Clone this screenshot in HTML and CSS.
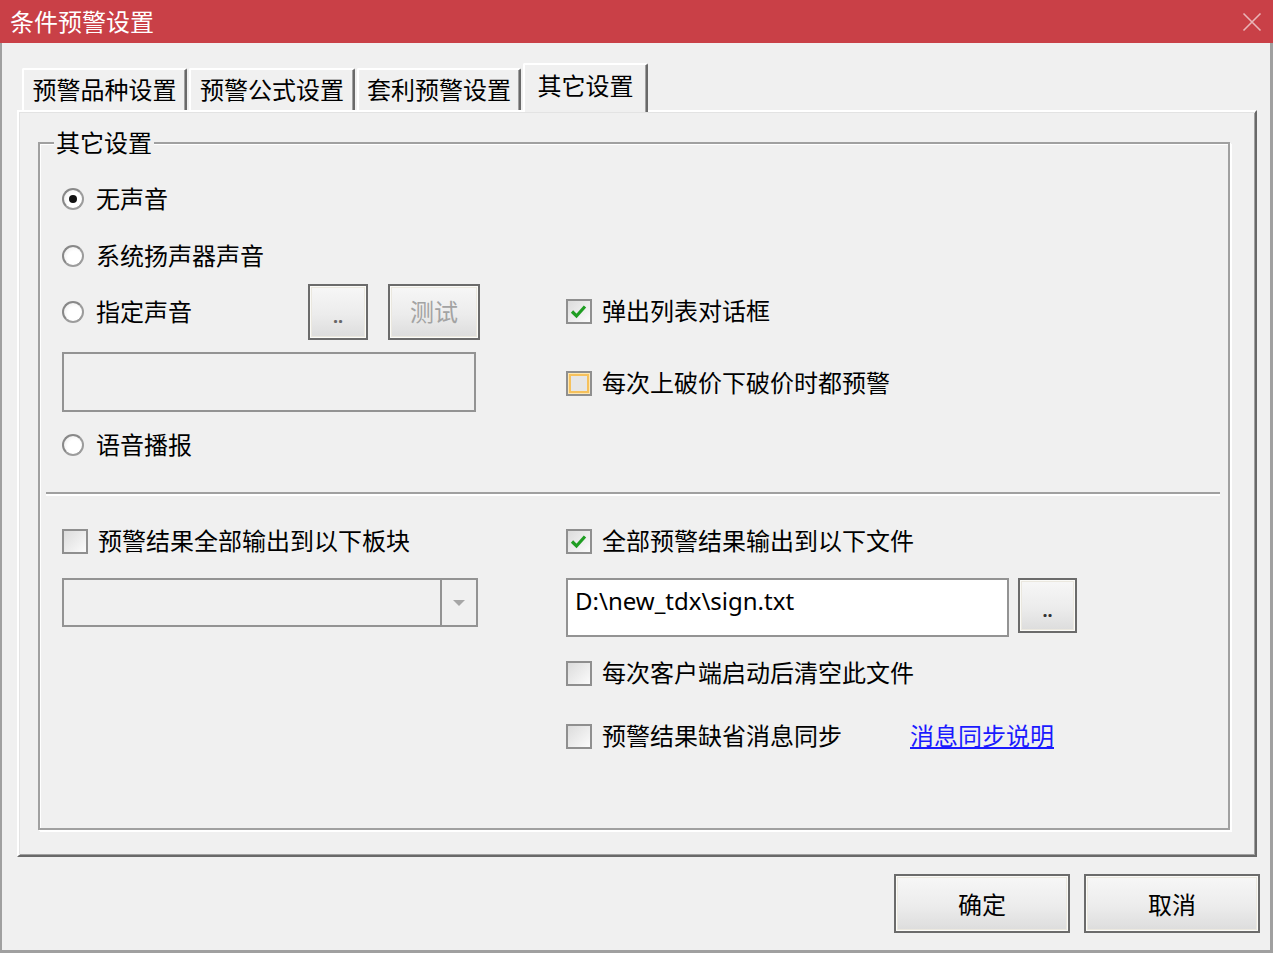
FILE: index.html
```html
<!DOCTYPE html>
<html lang="zh-CN">
<head>
<meta charset="utf-8">
<title>条件预警设置</title>
<link rel="stylesheet" href="styles.css">
</head>
<body>
<div class="window">
  <div class="titlebar">
    <span class="title">条件预警设置</span>
    <svg class="close" width="20" height="20" viewBox="0 0 20 20" aria-hidden="true"><path d="M1.5 1.5L18.5 18.5M18.5 1.5L1.5 18.5" stroke="#e9b5b8" stroke-width="1.6" fill="none"/></svg>
  </div>
  <div class="client">
    <div class="tabs">
      <div class="tab t1">预警品种设置</div>
      <div class="tab t2">预警公式设置</div>
      <div class="tab t3">套利预警设置</div>
      <div class="tab active">其它设置</div>
    </div>
    <div class="panel">
      <div class="group">
        <span class="group-title">其它设置</span>
        <div class="section upper">
          <div class="col">
            <div class="row r1"><span class="radio checked"></span>无声音</div>
            <div class="row r2"><span class="radio"></span>系统扬声器声音</div>
            <div class="row r3"><span class="radio"></span>指定声音<span class="spacer"></span><span class="btn b-dots">..</span><span class="btn b-test">测试</span></div>
            <div class="textbox"></div>
            <div class="row r4"><span class="radio"></span>语音播报</div>
          </div>
          <div class="col col-right-up">
            <div class="row"><span class="check"><svg width="22" height="21" viewBox="0 0 22 21"><path d="M4 10.5L8.5 15L17 5.5" stroke="#1f9e22" stroke-width="3.2" fill="none"/></svg></span>弹出列表对话框</div>
            <div class="row ru2"><span class="check hover"></span>每次上破价下破价时都预警</div>
          </div>
        </div>
        <div class="sep"></div>
        <div class="section lower">
          <div class="col">
            <div class="row l1"><span class="check"></span>预警结果全部输出到以下板块</div>
            <div class="combo"><span class="combo-btn"><span class="arrow"></span></span></div>
          </div>
          <div class="col">
            <div class="row l1"><span class="check"><svg width="22" height="21" viewBox="0 0 22 21"><path d="M4 10.5L8.5 15L17 5.5" stroke="#1f9e22" stroke-width="3.2" fill="none"/></svg></span>全部预警结果输出到以下文件</div>
            <div class="filerow">
              <div class="fileinput">D:\new_tdx\sign.txt</div>
              <span class="btn fbtn">..</span>
            </div>
            <div class="row l3"><span class="check"></span>每次客户端启动后清空此文件</div>
            <div class="row l4"><span class="check"></span>预警结果缺省消息同步<a class="link" href="#">消息同步说明</a></div>
          </div>
        </div>
      </div>
    </div>
    <div class="actions">
      <span class="btn abtn">确定</span>
      <span class="btn abtn">取消</span>
    </div>
  </div>
</div>
</body>
</html>
```
FILE: styles.css
```css
* { box-sizing: border-box; }
html, body { margin: 0; padding: 0; }
body {
  width: 1273px;
  height: 953px;
  overflow: hidden;
  background: #f0f0f0;
  font-family: "Noto Sans", "Noto Sans CJK SC", sans-serif;
  font-size: 24px;
  color: #000;
}
.window {
  width: 1273px;
  height: 953px;
  display: flex;
  flex-direction: column;
  background: #f0f0f0;
}
.titlebar {
  height: 43px;
  flex: none;
  background: #c94047;
  color: #fff;
  display: flex;
  align-items: center;
  justify-content: space-between;
  padding: 0 11px 0 10px;
}
.title { line-height: 43px; }
.close { display: block; }
.client {
  flex: 1;
  border-left: 2px solid #a0a0a0;
  border-right: 3px solid #a0a0a0;
  border-bottom: 3px solid #a0a0a0;
  display: flex;
  flex-direction: column;
}
.tabs {
  display: flex;
  align-items: flex-end;
  gap: 2px;
  height: 47px;
  margin: 20px 0 0 20px;
}
.tab {
  height: 42px;
  line-height: 39px;
  text-align: center;
  white-space: nowrap;
  border-top: 2px solid #fff;
  border-left: 2px solid #fff;
  border-right: 2px solid #696969;
  box-shadow: inset -1px 0 0 #a0a0a0;
  border-radius: 2px 2px 0 0;
  background: #f0f0f0;
}
.t1 { width: 165px; }
.t2 { width: 166px; }
.t3 { width: 164px; }
.tab.active {
  width: 125px;
  height: 49px;
  margin-bottom: -2px;
  line-height: 42px;
  padding-bottom: 5px;
  position: relative;
  z-index: 1;
}
.panel {
  width: 1240px;
  height: 747px;
  margin-left: 15px;
  border: 2px solid;
  border-color: #fff #696969 #696969 #fff;
  box-shadow: inset 1px 1px 0 #e3e3e3, inset -1px -1px 0 #a0a0a0;
  padding: 30px 0 0 19px;
}
.group {
  position: relative;
  width: 1192px;
  height: 688px;
  border: 2px solid #a0a0a0;
  box-shadow: inset 1px 1px 0 #fff, 1px 1px 0 #fff, 2px 2px 0 #fff;
}
.group-title {
  position: absolute;
  top: -16px;
  left: 14px;
  padding: 0 2px;
  line-height: 30px;
  background: #f0f0f0;
}
.section {
  display: grid;
  grid-template-columns: 504px 1fr;
  padding-left: 22px;
}
.col {
  display: flex;
  flex-direction: column;
  align-items: flex-start;
}
.row {
  display: flex;
  align-items: center;
  height: 30px;
  line-height: 30px;
  white-space: nowrap;
}
.r1 { margin-top: 40px; }
.r2 { margin-top: 27px; }
.r3 { margin-top: 13px; height: 56px; width: 418px; }
.r4 { margin-top: 18px; }
.col-right-up { padding-top: 152px; }
.ru2 { margin-top: 42px; }
.spacer { flex: 1; }

.radio {
  width: 22px;
  height: 22px;
  flex: none;
  margin-right: 12px;
  border-radius: 50%;
  border: 2px solid #9c9c9c;
  border-top-color: #888;
  border-left-color: #888;
  background: radial-gradient(circle at 60% 60%, #fff 45%, #e6e6e6 100%);
  display: flex;
  align-items: center;
  justify-content: center;
}
.radio.checked::after {
  content: "";
  width: 8px;
  height: 8px;
  border-radius: 50%;
  background: #111;
}
.check {
  width: 26px;
  height: 25px;
  flex: none;
  margin-right: 10px;
  border: 2px solid #8f8f8f;
  background: linear-gradient(135deg, #dcdcdc, #fbfbfb);
  display: flex;
  align-items: center;
  justify-content: center;
}
.check svg { display: block; }
.check.hover {
  background: #e6e6e6;
  box-shadow: inset 0 0 0 1px #fde7b4, inset 0 0 0 3px #f6c15c;
}
.btn {
  display: flex;
  align-items: center;
  justify-content: center;
  border: 2px solid #6b6b6b;
  background: linear-gradient(#f7f7f7, #ececec 55%, #dcdcdc);
  box-shadow: inset 0 0 0 1px #fbfbf8, inset 0 0 0 2px #ebe8df;
  white-space: nowrap;
}
.b-dots {
  width: 60px;
  height: 56px;
  font-size: 18px;
  font-weight: bold;
  color: #666;
  padding-top: 8px;
}
.b-test {
  width: 92px;
  height: 56px;
  margin-left: 20px;
  color: #a3a3a3;
}
.textbox {
  width: 414px;
  height: 60px;
  margin-top: 12px;
  border: 2px solid #939393;
}
.sep {
  margin: 32px 8px 0 6px;
  border-top: 2px solid #a0a0a0;
  border-bottom: 2px solid #fff;
}
.l1 { margin-top: 30px; }
.combo {
  width: 416px;
  height: 49px;
  margin-top: 22px;
  border: 2px solid #939393;
  display: flex;
  justify-content: flex-end;
}
.combo-btn {
  width: 36px;
  border-left: 2px solid #939393;
  display: flex;
  align-items: center;
  justify-content: center;
}
.arrow {
  width: 0;
  height: 0;
  border-left: 6px solid transparent;
  border-right: 6px solid transparent;
  border-top: 6px solid #a6a6a6;
}
.filerow {
  display: flex;
  align-items: flex-start;
  gap: 9px;
  margin-top: 22px;
}
.fileinput {
  width: 443px;
  height: 59px;
  border: 2px solid #939393;
  background: #fff;
  padding: 6px 0 0 7px;
  line-height: 30px;
  white-space: nowrap;
}
.fbtn {
  width: 59px;
  height: 55px;
  font-size: 18px;
  font-weight: bold;
  color: #333;
  padding-top: 8px;
}
.l3 { margin-top: 21px; }
.l4 { margin-top: 33px; }
.link {
  margin-left: 68px;
  color: #1a1aff;
  text-decoration: underline;
}
.actions {
  display: flex;
  justify-content: flex-end;
  gap: 14px;
  margin: 17px 10px 0 0;
}
.abtn {
  width: 176px;
  height: 59px;
}
```
